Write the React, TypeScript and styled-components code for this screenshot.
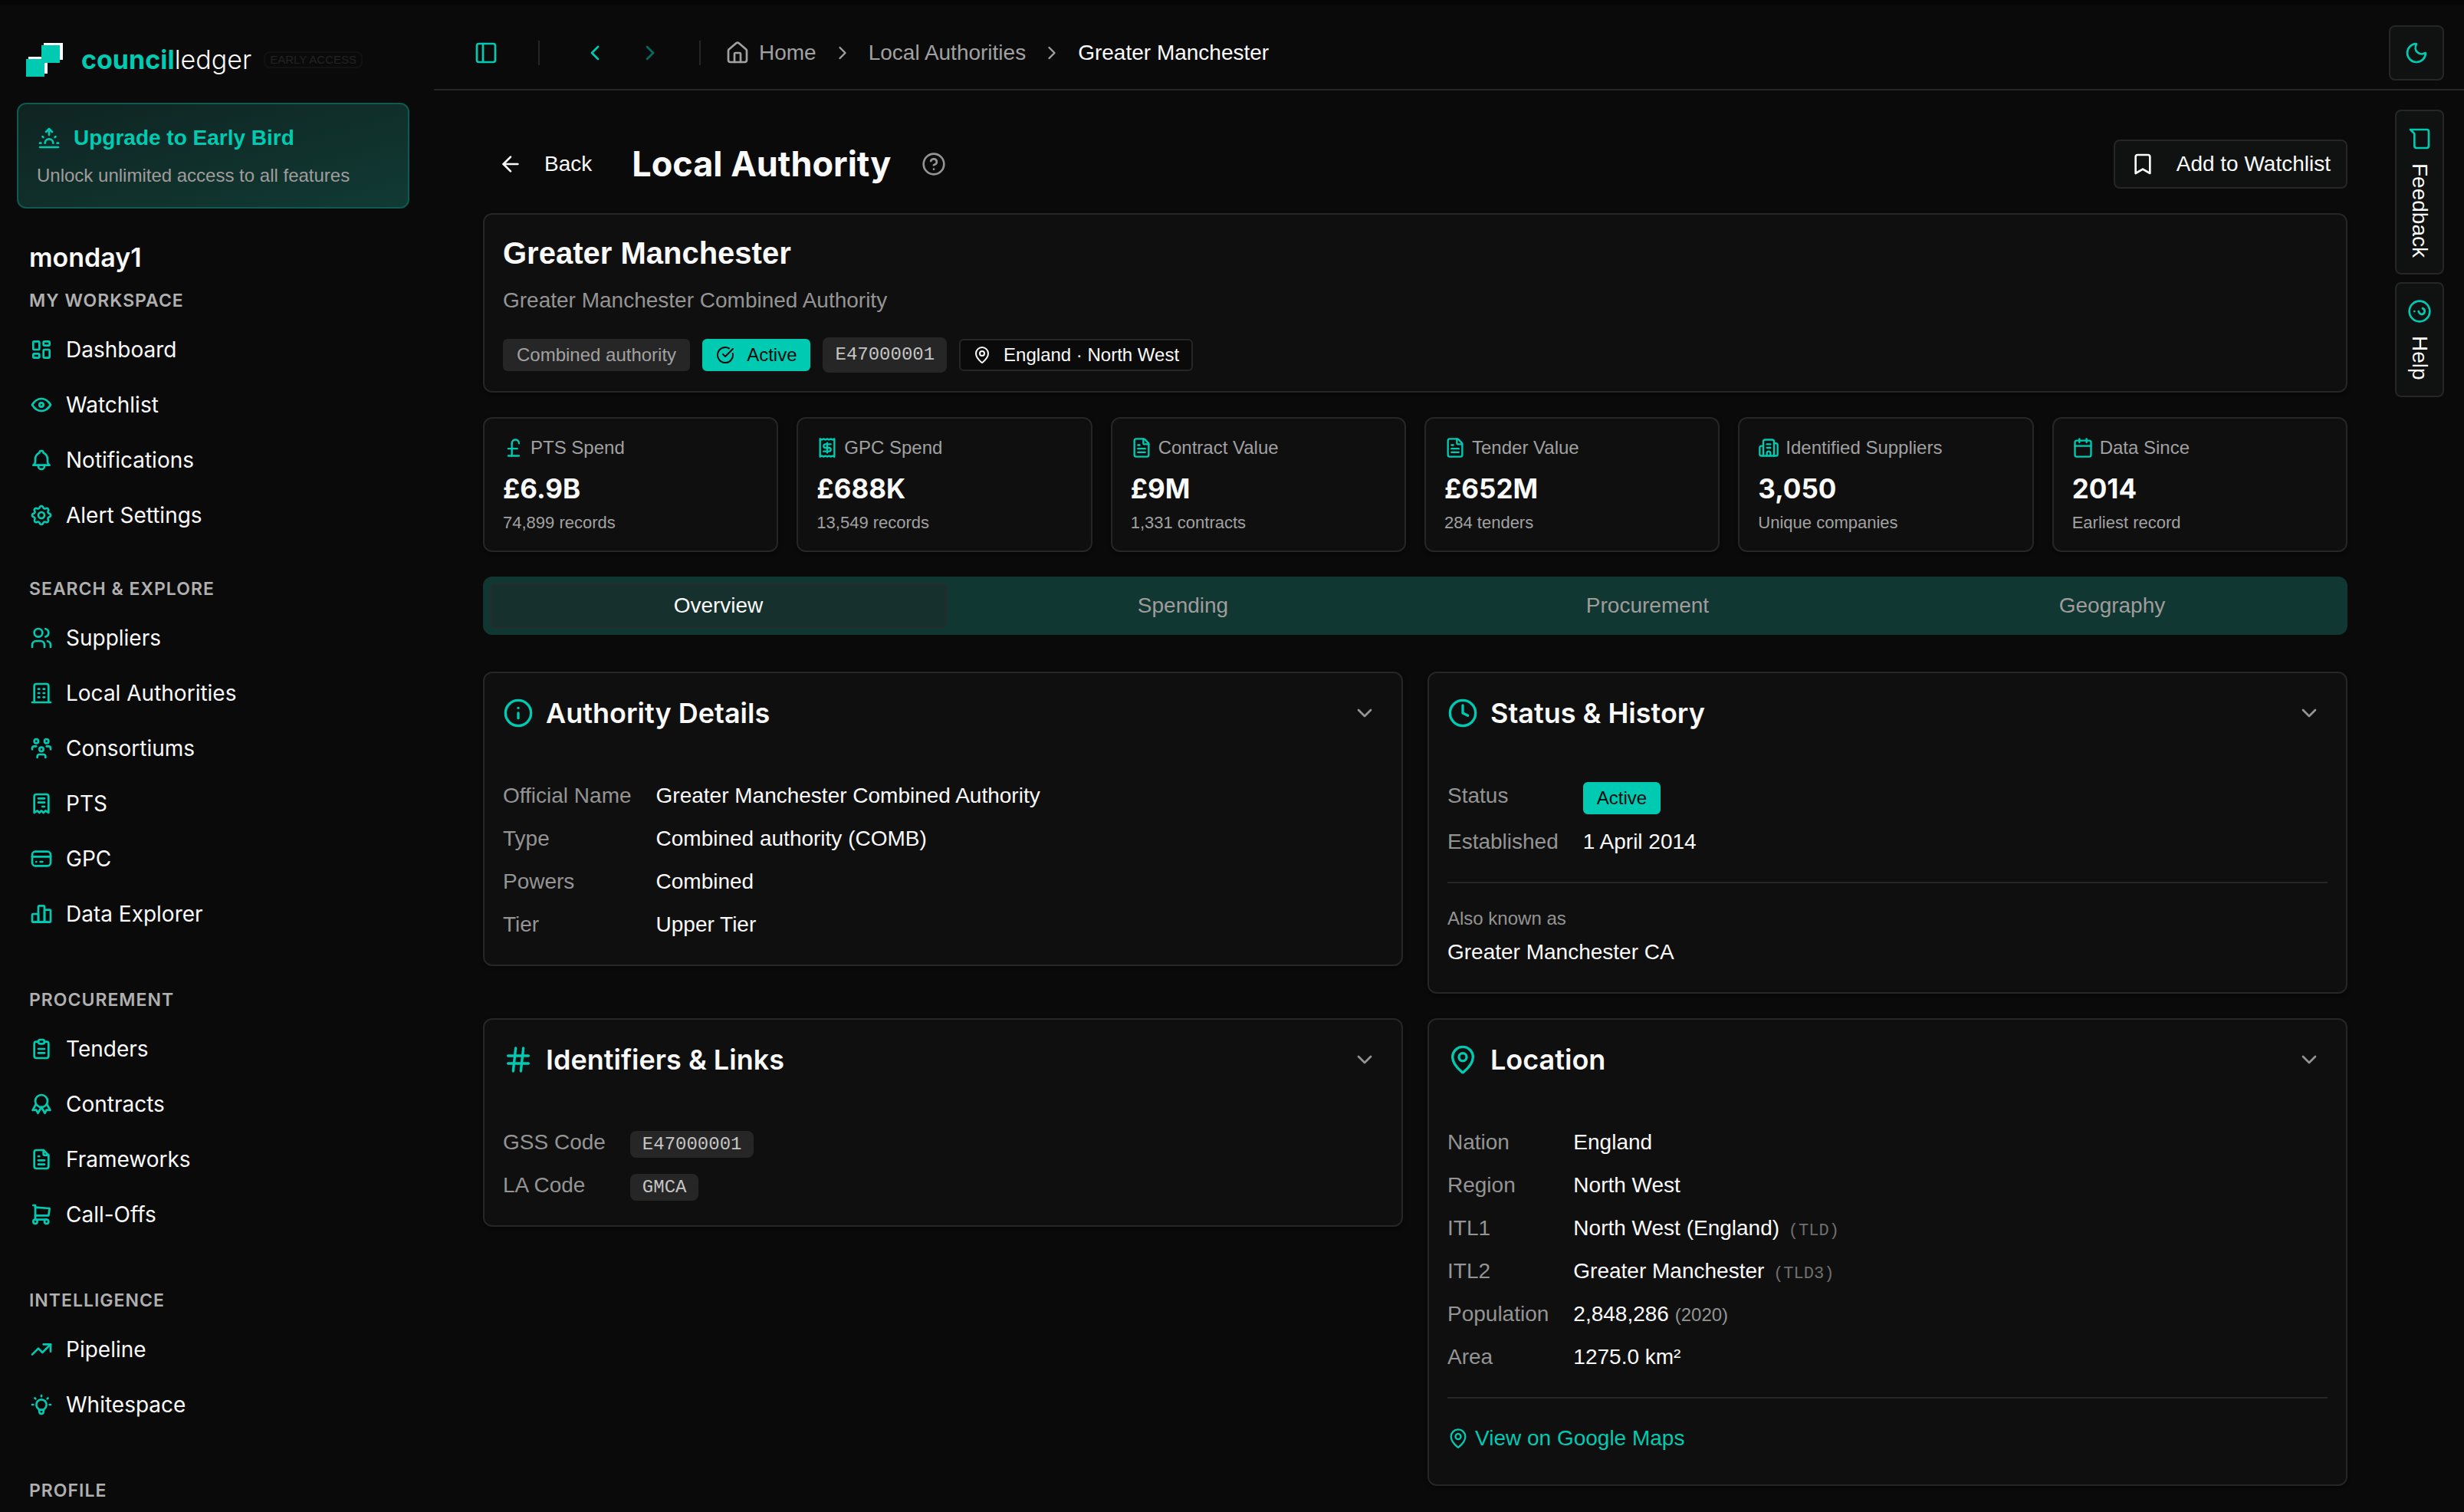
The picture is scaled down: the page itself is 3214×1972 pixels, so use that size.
import React from "react";
import styled, { createGlobalStyle } from "styled-components";
import {
  ArrowLeft,
  Bookmark,
  Building2,
  Calendar,
  ChevronDown,
  ChevronLeft,
  ChevronRight,
  CircleCheckBig,
  CircleHelp,
  Clock,
  FileText,
  Hash,
  House,
  Info,
  MapPin,
  Moon,
  PanelLeft,
  PoundSterling,
  Receipt,
} from "lucide-react";
import {
  TbAward,
  TbBell,
  TbBuilding,
  TbBulb,
  TbChartBar,
  TbClipboardText,
  TbCreditCard,
  TbEye,
  TbFileText,
  TbLayoutDashboard,
  TbReceipt,
  TbSettings,
  TbShoppingCart,
  TbSunrise,
  TbTrendingUp,
  TbUsers,
  TbUsersGroup,
} from "react-icons/tb";

const color = {
  page: "#0a0a0a",
  edge: "#050505",
  panel: "#0f0f0f",
  control: "#0f1211",
  line: "#262626",
  text: "#fafafa",
  muted: "#949494",
  faint: "#6f6f6f",
  accent: "#00cbb2",
  tabs: "#113732",
};

const sans = `"Liberation Sans", Arial, sans-serif`;
const display = `Inter, "Liberation Sans", sans-serif`;
const mono = `"Liberation Mono", "Courier New", monospace`;

const GlobalStyle = createGlobalStyle`
  *, *::before, *::after { box-sizing: border-box; }
  body {
    margin: 0;
    background: ${color.page};
    color: ${color.text};
    font: 28px/40px ${sans};
  }
  h1, h2, h3, p, dl, dd, ul { margin: 0; padding: 0; }
  ul { list-style: none; }
  button { font: inherit; color: inherit; background: none; border: 0; padding: 0; margin: 0; cursor: pointer; }
  a { color: inherit; text-decoration: none; }
  svg { flex: none; display: block; }
`;

/* ---------- shell ---------- */

const Shell = styled.div`
  display: grid;
  grid-template-columns: 566px minmax(0, 1fr);
  height: 100vh;
  overflow: hidden;
  border-top: 6px solid ${color.edge};
`;

const Sidebar = styled.aside`
  display: flex;
  flex-direction: column;
  padding: 16px 32px 0 22px;
  overflow: hidden;
`;

const Main = styled.div`
  display: flex;
  flex-direction: column;
  padding-top: 16px;
  min-width: 0;
`;

/* ---------- sidebar ---------- */

const Brand = styled.a`
  display: flex;
  align-items: center;
  flex: none;
  height: 112px;
  padding: 0 12px;
`;

const Wordmark = styled.span`
  margin: 0 16px 0 24px;
  font: 300 34px/40px ${display};
  b {
    font-weight: 700;
    color: ${color.accent};
  }
`;

const EarlyAccess = styled.span`
  padding: 0 6px;
  border: 2px solid #121212;
  border-radius: 8px;
  font-size: 15px;
  line-height: 18px;
  color: #222424;
`;

const Upgrade = styled.a`
  display: block;
  flex: none;
  padding: 24px;
  border: 2px solid #0f5a50;
  border-radius: 12px;
  background: linear-gradient(to bottom right, #0f2421, #113a34);
`;

const UpgradeTitle = styled.span`
  display: flex;
  align-items: center;
  gap: 16px;
  font-weight: 700;
  line-height: 40px;
  color: ${color.accent};
`;

const UpgradeText = styled.span`
  display: block;
  margin-top: 12px;
  font-size: 24px;
  line-height: 34px;
  color: #a09c9c;
`;

const Team = styled.h2`
  flex: none;
  margin-top: 40px;
  padding: 0 16px;
  font: 600 34px/48px ${display};
`;

const Groups = styled.nav`
  display: flex;
  flex-direction: column;
  gap: 48px;
`;

const Workspace = styled.nav`
  margin-bottom: 32px;
`;

const GroupLabel = styled.h3`
  padding: 0 16px;
  font: 600 23px/64px ${display};
  letter-spacing: 1px;
  text-transform: uppercase;
  color: #b0b0b0;
`;

const NavList = styled.ul`
  display: flex;
  flex-direction: column;
  gap: 8px;
`;

const NavLink = styled.a`
  display: flex;
  align-items: center;
  gap: 16px;
  height: 64px;
  padding: 0 16px;
  font-family: ${display};
  svg {
    width: 32px;
    height: 32px;
    color: ${color.accent};
  }
`;

/* ---------- top bar ---------- */

const TopBar = styled.header`
  display: flex;
  align-items: center;
  flex: none;
  height: 96px;
  padding: 0 26px 0 36px;
  border-bottom: 2px solid ${color.line};
`;

const IconButton = styled.button`
  display: flex;
  align-items: center;
  justify-content: center;
  width: 64px;
  height: 64px;
  color: ${color.accent};
  &:disabled {
    opacity: 0.5;
  }
`;

const Divider = styled.span<{ $before: number; $after: number }>`
  width: 2px;
  height: 32px;
  margin: 0 ${(p) => p.$after}px 0 ${(p) => p.$before}px;
  background: ${color.line};
`;

const HistoryButtons = styled.div`
  display: flex;
  gap: 8px;
`;

const Breadcrumbs = styled.nav`
  display: flex;
  align-items: center;
  gap: 20px;
  color: #a1a1a1;
`;

const Crumb = styled.a`
  display: flex;
  align-items: center;
  gap: 12px;
  &[aria-current] {
    color: ${color.text};
  }
`;

const ThemeButton = styled(IconButton)`
  width: 72px;
  height: 72px;
  margin-left: auto;
  border: 2px solid ${color.line};
  border-radius: 8px;
  background: ${color.control};
`;

/* ---------- page body ---------- */

const Body = styled.div`
  display: grid;
  grid-template-columns: minmax(0, 1fr) auto;
  align-items: start;
  gap: 62px;
  padding: 0 26px 0 64px;
`;

const Content = styled.main`
  padding-top: 64px;
`;

const SideActions = styled.aside`
  display: flex;
  flex-direction: column;
  gap: 10px;
  padding-top: 25px;
`;

const SideButton = styled.button`
  display: flex;
  align-items: center;
  gap: 16px;
  width: 64px;
  padding: 20px 0;
  border: 2px solid ${color.line};
  border-radius: 8px;
  background: ${color.control};
  line-height: 60px;
  writing-mode: vertical-rl;
  svg {
    color: ${color.accent};
    transform: rotate(90deg);
  }
`;

const TitleRow = styled.div`
  display: flex;
  align-items: center;
  margin-bottom: 32px;
`;

const BackLink = styled.a`
  display: flex;
  align-items: center;
  gap: 28px;
  height: 64px;
  padding: 0 20px;
`;

const Title = styled.h1`
  margin: 0 40px 0 32px;
  font: 700 45px/64px ${display};
`;

const HelpButton = styled.button`
  color: ${color.muted};
`;

const WatchButton = styled.button`
  display: flex;
  align-items: center;
  gap: 28px;
  height: 64px;
  margin-left: auto;
  padding: 0 20px;
  border: 2px solid ${color.line};
  border-radius: 8px;
  background: ${color.control};
`;

const Panel = styled.section`
  border: 2px solid ${color.line};
  border-radius: 12px;
  background: ${color.panel};
  box-shadow: 0 2px 4px rgba(0, 0, 0, 0.4);
`;

const Summary = styled(Panel)`
  padding: 24px;
`;

const Name = styled.h2`
  font-size: 40px;
  line-height: 52px;
`;

const OfficialName = styled.p`
  margin-top: 16px;
  color: ${color.muted};
`;

const Badge = styled.span<{ $tone: "muted" | "accent" | "outline" }>`
  display: inline-flex;
  align-items: center;
  gap: 16px;
  padding: 0 16px;
  border: 2px solid;
  border-radius: 6px;
  font-size: 24px;
  line-height: 38px;
  ${(p) =>
    p.$tone === "muted"
      ? `background: ${color.line}; border-color: ${color.line}; color: #a1a1a1;`
      : p.$tone === "accent"
        ? `background: ${color.accent}; border-color: ${color.accent}; color: ${color.page};`
        : `background: ${color.page}; border-color: ${color.line}; color: ${color.text};`}
`;

const Code = styled.code`
  padding: 4px 16px;
  border-radius: 8px;
  background: ${color.line};
  font: 24px/32px ${mono};
  color: #c4c4c4;
`;

const Badges = styled.div`
  display: flex;
  align-items: center;
  gap: 16px;
  margin-top: 28px;
  ${Code} {
    line-height: 38px;
  }
`;

const Stats = styled.div`
  display: grid;
  grid-template-columns: repeat(6, minmax(0, 1fr));
  gap: 24px;
  margin: 32px 0;
`;

const Stat = styled(Panel)`
  padding: 24px;
`;

const StatLabel = styled.h3`
  display: flex;
  align-items: center;
  gap: 8px;
  font-size: 24px;
  font-weight: 400;
  line-height: 28px;
  color: #a1a1a1;
  svg {
    color: ${color.accent};
  }
`;

const StatValue = styled.p`
  margin-top: 14px;
  font: 700 35px/50px ${display};
`;

const StatNote = styled.p`
  margin-top: 8px;
  font-size: 22px;
  line-height: 24px;
  color: #a1a1a1;
`;

const Tabs = styled.div`
  display: flex;
  padding: 9px 4px;
  border-radius: 12px;
  background: ${color.tabs};
`;

const Tab = styled.button`
  flex: 1;
  height: 58px;
  margin: 0 5px;
  border: 2px solid transparent;
  border-radius: 8px;
  color: #a09c9c;
  &[aria-selected="true"] {
    border-color: #282b2a;
    background: #16312d;
    color: ${color.text};
  }
`;

const Cards = styled.div`
  display: grid;
  grid-template-columns: repeat(2, minmax(0, 1fr));
  align-items: start;
  gap: 32px;
  margin-top: 48px;
`;

const CardHeader = styled.button`
  display: flex;
  align-items: center;
  gap: 16px;
  width: 100%;
  padding: 32px;
  padding-left: 24px;
  color: ${color.muted};
  text-align: left;
  svg:first-child {
    color: ${color.accent};
  }
`;

const CardTitle = styled.span`
  flex: 1;
  font: 600 36px/40px ${display};
  color: ${color.text};
`;

const CardBody = styled.div`
  padding: 36px 24px 32px;
`;

const Details = styled.dl`
  display: grid;
  grid-template-columns: max-content 1fr;
  gap: 16px 32px;
  dt {
    color: ${color.muted};
  }
`;

const BadgeValue = styled.dd`
  display: flex;
  padding-top: 2px;
`;

const Small = styled.small`
  font-size: 24px;
  line-height: 32px;
  color: ${color.muted};
`;

const SmallCode = styled.small`
  margin-left: 4px;
  font: 22px/32px ${mono};
  color: ${color.faint};
`;

const CardFooter = styled.div`
  margin-top: 32px;
  border-top: 2px solid ${color.line};
`;

const Alias = styled(CardFooter)`
  display: flex;
  flex-direction: column;
  gap: 8px;
  padding-top: 30px;
`;

const MapFooter = styled(CardFooter)`
  padding-top: 24px;
`;

const MapLink = styled.a`
  display: inline-flex;
  align-items: center;
  gap: 8px;
  height: 56px;
  color: ${color.accent};
  vertical-align: top;
`;

/* ---------- drawings ---------- */

const Logo = () => (
  <svg width="48" height="44" viewBox="0 0 48 44" aria-hidden="true">
    <path d="M23 0H48V22H44V3H23z" fill="#fff" />
    <path d="M3 18H20V21H3z" fill="#fff" />
    <path d="M24 26H28V40H24z" fill="#fff" />
    <path d="M20 3H44V26H20z" fill={color.accent} />
    <path d="M0 21H24V44H0z" fill={color.accent} />
  </svg>
);

const MessageIcon = () => (
  <svg
    width="32"
    height="32"
    viewBox="0 0 24 24"
    fill="none"
    stroke="currentColor"
    strokeWidth="2"
    strokeLinecap="round"
    strokeLinejoin="round"
    aria-hidden="true"
  >
    <path d="M21 15a2 2 0 0 1-2 2H7l-4 4V5a2 2 0 0 1 2-2h14a2 2 0 0 1 2 2z" />
  </svg>
);

/* ---------- data ---------- */

type Icon = React.ComponentType<any>;
type NavItem = [string, Icon];

const workspace: NavItem[] = [
  ["Dashboard", TbLayoutDashboard],
  ["Watchlist", TbEye],
  ["Notifications", TbBell],
  ["Alert Settings", TbSettings],
];

const groups: { label: string; items: NavItem[] }[] = [
  {
    label: "Search & Explore",
    items: [
      ["Suppliers", TbUsers],
      ["Local Authorities", TbBuilding],
      ["Consortiums", TbUsersGroup],
      ["PTS", TbReceipt],
      ["GPC", TbCreditCard],
      ["Data Explorer", TbChartBar],
    ],
  },
  {
    label: "Procurement",
    items: [
      ["Tenders", TbClipboardText],
      ["Contracts", TbAward],
      ["Frameworks", TbFileText],
      ["Call-Offs", TbShoppingCart],
    ],
  },
  {
    label: "Intelligence",
    items: [
      ["Pipeline", TbTrendingUp],
      ["Whitespace", TbBulb],
    ],
  },
  { label: "Profile", items: [] },
];

const stats: [Icon, string, string, string][] = [
  [PoundSterling, "PTS Spend", "£6.9B", "74,899 records"],
  [Receipt, "GPC Spend", "£688K", "13,549 records"],
  [FileText, "Contract Value", "£9M", "1,331 contracts"],
  [FileText, "Tender Value", "£652M", "284 tenders"],
  [Building2, "Identified Suppliers", "3,050", "Unique companies"],
  [Calendar, "Data Since", "2014", "Earliest record"],
];

const tabs = ["Overview", "Spending", "Procurement", "Geography"];

/* ---------- parts ---------- */

const NavGroup = ({ label, items }: { label: string; items: NavItem[] }) => (
  <>
    <GroupLabel>{label}</GroupLabel>
    <NavList>
      {items.map(([name, ItemIcon]) => (
        <li key={name}>
          <NavLink href="#">
            <ItemIcon aria-hidden="true" />
            {name}
          </NavLink>
        </li>
      ))}
    </NavList>
  </>
);

const Card = ({
  icon: CardIcon,
  title,
  children,
}: {
  icon: Icon;
  title: string;
  children: React.ReactNode;
}) => (
  <Panel>
    <CardHeader aria-expanded="true">
      <CardIcon size={40} />
      <CardTitle>{title}</CardTitle>
      <ChevronDown size={32} />
    </CardHeader>
    <CardBody>{children}</CardBody>
  </Panel>
);

export default function App() {
  const [tab, setTab] = React.useState(tabs[0]);

  return (
    <>
      <GlobalStyle />
      <Shell>
        <Sidebar>
          <Brand href="#">
            <Logo />
            <Wordmark>
              <b>council</b>ledger
            </Wordmark>
            <EarlyAccess>EARLY ACCESS</EarlyAccess>
          </Brand>
          <Upgrade href="#">
            <UpgradeTitle>
              <TbSunrise size={32} aria-hidden="true" />
              Upgrade to Early Bird
            </UpgradeTitle>
            <UpgradeText>Unlock unlimited access to all features</UpgradeText>
          </Upgrade>
          <Team>monday1</Team>
          <Workspace aria-label="My workspace">
            <NavGroup label="My Workspace" items={workspace} />
          </Workspace>
          <Groups aria-label="Sections">
            {groups.map((g) => (
              <div key={g.label}>
                <NavGroup {...g} />
              </div>
            ))}
          </Groups>
        </Sidebar>

        <Main>
          <TopBar>
            <IconButton aria-label="Toggle sidebar">
              <PanelLeft size={32} />
            </IconButton>
            <Divider $before={36} $after={40} />
            <HistoryButtons>
              <IconButton aria-label="Go back">
                <ChevronLeft size={32} />
              </IconButton>
              <IconButton aria-label="Go forward" disabled>
                <ChevronRight size={32} />
              </IconButton>
            </HistoryButtons>
            <Divider $before={32} $after={32} />
            <Breadcrumbs aria-label="Breadcrumb">
              <Crumb href="#">
                <House size={32} />
                Home
              </Crumb>
              <ChevronRight size={28} />
              <Crumb href="#">Local Authorities</Crumb>
              <ChevronRight size={28} />
              <Crumb href="#" aria-current="page">
                Greater Manchester
              </Crumb>
            </Breadcrumbs>
            <ThemeButton aria-label="Switch theme">
              <Moon size={32} />
            </ThemeButton>
          </TopBar>

          <Body>
            <Content>
              <TitleRow>
                <BackLink href="#">
                  <ArrowLeft size={32} />
                  Back
                </BackLink>
                <Title>Local Authority</Title>
                <HelpButton aria-label="About this page">
                  <CircleHelp size={32} />
                </HelpButton>
                <WatchButton>
                  <Bookmark size={32} />
                  Add to Watchlist
                </WatchButton>
              </TitleRow>

              <Summary>
                <Name>Greater Manchester</Name>
                <OfficialName>Greater Manchester Combined Authority</OfficialName>
                <Badges>
                  <Badge $tone="muted">Combined authority</Badge>
                  <Badge $tone="accent">
                    <CircleCheckBig size={24} />
                    Active
                  </Badge>
                  <Code>E47000001</Code>
                  <Badge $tone="outline">
                    <MapPin size={24} />
                    England · North West
                  </Badge>
                </Badges>
              </Summary>

              <Stats>
                {stats.map(([StatIcon, label, value, note]) => (
                  <Stat key={label}>
                    <StatLabel>
                      <StatIcon size={28} />
                      {label}
                    </StatLabel>
                    <StatValue>{value}</StatValue>
                    <StatNote>{note}</StatNote>
                  </Stat>
                ))}
              </Stats>

              <Tabs role="tablist">
                {tabs.map((name) => (
                  <Tab
                    key={name}
                    role="tab"
                    aria-selected={name === tab}
                    onClick={() => setTab(name)}
                  >
                    {name}
                  </Tab>
                ))}
              </Tabs>

              <Cards>
                <Card icon={Info} title="Authority Details">
                  <Details>
                    <dt>Official Name</dt>
                    <dd>Greater Manchester Combined Authority</dd>
                    <dt>Type</dt>
                    <dd>Combined authority (COMB)</dd>
                    <dt>Powers</dt>
                    <dd>Combined</dd>
                    <dt>Tier</dt>
                    <dd>Upper Tier</dd>
                  </Details>
                </Card>

                <Card icon={Clock} title="Status & History">
                  <Details>
                    <dt>Status</dt>
                    <BadgeValue>
                      <Badge $tone="accent">Active</Badge>
                    </BadgeValue>
                    <dt>Established</dt>
                    <dd>1 April 2014</dd>
                  </Details>
                  <Alias>
                    <Small>Also known as</Small>
                    <p>Greater Manchester CA</p>
                  </Alias>
                </Card>

                <Card icon={Hash} title="Identifiers & Links">
                  <Details>
                    <dt>GSS Code</dt>
                    <dd>
                      <Code>E47000001</Code>
                    </dd>
                    <dt>LA Code</dt>
                    <dd>
                      <Code>GMCA</Code>
                    </dd>
                  </Details>
                </Card>

                <Card icon={MapPin} title="Location">
                  <Details>
                    <dt>Nation</dt>
                    <dd>England</dd>
                    <dt>Region</dt>
                    <dd>North West</dd>
                    <dt>ITL1</dt>
                    <dd>
                      North West (England) <SmallCode>(TLD)</SmallCode>
                    </dd>
                    <dt>ITL2</dt>
                    <dd>
                      Greater Manchester <SmallCode>(TLD3)</SmallCode>
                    </dd>
                    <dt>Population</dt>
                    <dd>
                      2,848,286 <Small>(2020)</Small>
                    </dd>
                    <dt>Area</dt>
                    <dd>1275.0 km²</dd>
                  </Details>
                  <MapFooter>
                    <MapLink href="#">
                      <MapPin size={28} />
                      View on Google Maps
                    </MapLink>
                  </MapFooter>
                </Card>
              </Cards>
            </Content>

            <SideActions>
              <SideButton>
                <MessageIcon />
                Feedback
              </SideButton>
              <SideButton>
                <CircleHelp size={32} />
                Help
              </SideButton>
            </SideActions>
          </Body>
        </Main>
      </Shell>
    </>
  );
}
